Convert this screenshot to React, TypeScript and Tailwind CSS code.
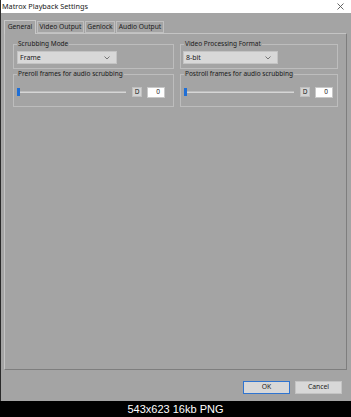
import React from "react";

const font = { fontFamily: '"Noto Sans", "Open Sans", sans-serif' };

function Dropdown({ value, width }: { value: string; width: string }) {
  return (
    <div className={`${width} h-[13px] bg-[#d8d8d8] border border-[#c4c4c4] flex items-center justify-between pl-[2px] pr-[6px]`}>
      <span className="text-[7px] leading-none text-[#1a1a1a]">{value}</span>
      <svg width="6" height="4" viewBox="0 0 6 4">
        <path d="M0.5 0.5 L3 3 L5.5 0.5" stroke="#6a6a6a" strokeWidth="0.9" fill="none" />
      </svg>
    </div>
  );
}

function Group({ label, className, children }: { label: string; className: string; children: React.ReactNode }) {
  return (
    <div className={`relative border border-[#bdbdbd] ${className}`}>
      <span className="absolute left-[3px] top-[-6px] bg-[#a4a4a4] px-[1px] text-[6.5px] leading-[10px] text-[#1a1a1a]">{label}</span>
      {children}
    </div>
  );
}

function SliderRow({ trackW }: { trackW: string }) {
  return (
    <div className="flex items-center h-[10px] pl-[3px]">
      <div className={`relative ${trackW} h-[10px] flex items-center`}>
        <div className="w-full h-[2px] bg-[#d6d6d6] border-t border-[#bdbdbd]" />
        <div className="absolute left-0 top-[1px] w-[3px] h-[8px] bg-[#1f6fd6]" />
      </div>
      <div className="ml-[6px] w-[10px] h-[10px] bg-[#d4d4d4] border border-[#c0c0c0] flex items-center justify-center text-[6.5px] leading-none text-[#1a1a1a]">D</div>
      <div className="ml-[5px] w-[18px] h-[11px] bg-white border border-[#c8c8c8] flex items-center justify-end pr-[4px] text-[6.5px] leading-none text-[#1a1a1a]">0</div>
    </div>
  );
}

export default function App() {
  const tab = "h-[12px] ml-[1px] border border-[#c0c0c0] flex items-center justify-center text-[6.7px] leading-none text-[#1a1a1a]";
  return (
    <div className="w-[351px] h-[417px] bg-black flex flex-col overflow-hidden" style={font}>
      <div className="h-[401px] bg-[#a4a4a4] border-l border-[#2a2a2a] flex flex-col">
        {/* Title bar */}
        <div className="h-[13px] bg-white flex items-center justify-between pl-[1px] pr-[7px]">
          <span className="text-[7.3px] leading-none text-[#1a1a1a]">Matrox Playback Settings</span>
          <svg width="7" height="7" viewBox="0 0 7 7">
            <path d="M0.5 0.5 L6.5 6.5 M6.5 0.5 L0.5 6.5" stroke="#555" strokeWidth="0.9" />
          </svg>
        </div>

        {/* Tabs */}
        <div className="flex items-end pl-[3px] pt-[7px] h-[20px]">
          <div className="w-[32px] h-[14px] border border-b-0 border-[#c8c8c8] bg-[#a4a4a4] flex items-center justify-center text-[6.7px] leading-none text-[#1a1a1a] relative z-10 mb-[-1px]">General</div>
          <div className={`w-[47px] ${tab}`}>Video Output</div>
          <div className={`w-[30px] ${tab}`}>Genlock</div>
          <div className={`w-[48px] ${tab}`}>Audio Output</div>
        </div>

        {/* Panel */}
        <div className="ml-[3px] mr-[4px] h-[337px] border-t border-l border-[#c4c4c4] border-r border-b border-r-[#7e7e7e] border-b-[#7e7e7e] flex pt-[10px] pl-[8px]">
          <div className="flex flex-col gap-[5px] w-[161px]">
            <Group label="Scrubbing Mode" className="h-[25px] pt-[6px] pl-[3px]">
              <Dropdown value="Frame" width="w-[100px]" />
            </Group>
            <Group label="Preroll frames for audio scrubbing" className="h-[33px] pt-[12px]">
              <SliderRow trackW="w-[109px]" />
            </Group>
          </div>
          <div className="flex flex-col gap-[5px] w-[158px] ml-[6px]">
            <Group label="Video Processing Format" className="h-[25px] pt-[6px] pl-[2px]">
              <Dropdown value="8-bit" width="w-[95px]" />
            </Group>
            <Group label="Postroll frames for audio scrubbing" className="h-[33px] pt-[12px]">
              <SliderRow trackW="w-[110px]" />
            </Group>
          </div>
        </div>

        {/* Buttons */}
        <div className="flex justify-end gap-[5px] pr-[9px] pt-[11px]">
          <div className="w-[47px] h-[13px] bg-[#d8d8d8] border border-[#2f74d0] flex items-center justify-center text-[6.8px] leading-none text-[#1a1a1a]">OK</div>
          <div className="w-[47px] h-[13px] bg-[#d8d8d8] border border-[#c4c4c4] flex items-center justify-center text-[6.8px] leading-none text-[#1a1a1a]">Cancel</div>
        </div>
      </div>
      <div className="flex-1 flex items-center justify-center text-white text-[11px] leading-none" style={{ fontFamily: '"Liberation Sans", Arial, sans-serif' }}>
        543x623 16kb PNG
      </div>
    </div>
  );
}
